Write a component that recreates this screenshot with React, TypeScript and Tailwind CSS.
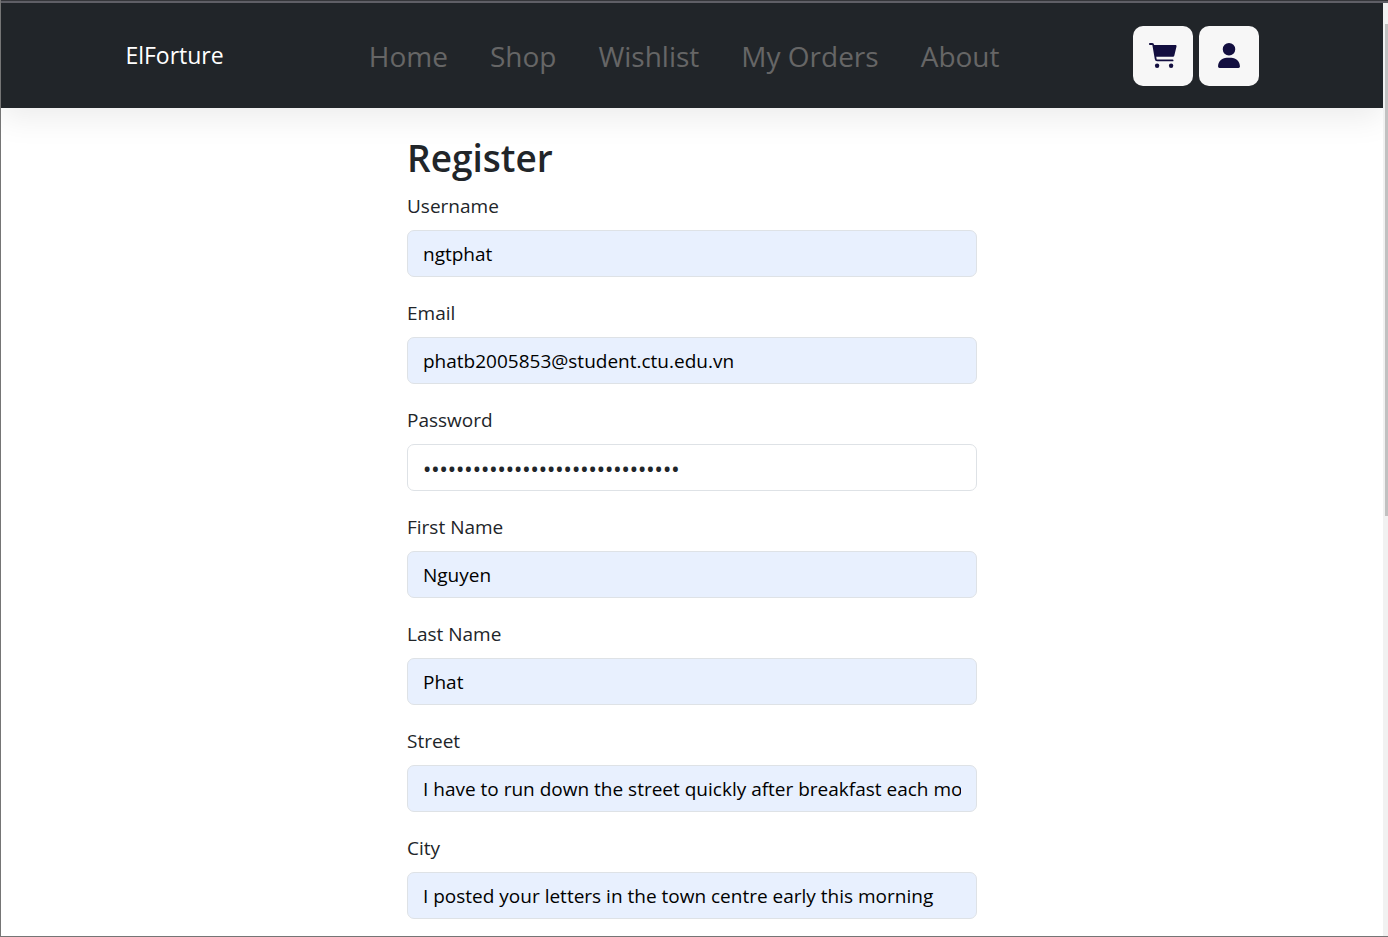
import { FaUser } from "react-icons/fa6";

type FieldProps = {
  id: string;
  label: string;
  type?: string;
  value: string;
  filled?: boolean;
};

const links = ["Home", "Shop", "Wishlist", "My Orders", "About"];

const fields: FieldProps[] = [
  { id: "username", label: "Username", value: "ngtphat", filled: true },
  { id: "email", label: "Email", type: "email", value: "phatb2005853@student.ctu.edu.vn", filled: true },
  { id: "password", label: "Password", type: "password", value: "correcthorsebatterystaple-12345" },
  { id: "firstName", label: "First Name", value: "Nguyen", filled: true },
  { id: "lastName", label: "Last Name", value: "Phat", filled: true },
  { id: "street", label: "Street", value: "I have to run down the street quickly after breakfast each morning", filled: true },
  { id: "city", label: "City", value: "I posted your letters in the town centre early this morning", filled: true },
];

function CartIcon() {
  return (
    <svg viewBox="0 0 28 26" className="h-[26px] w-7" fill="currentColor" aria-hidden="true">
      <path d="M4.2 2H26.4c.9 0 1.3.6 1.1 1.4l-2.1 8.8c-.2 1-.9 1.6-1.9 1.6H6.4z" />
      <path
        d="M.8 1H3.2c.7 0 1 .3 1.1 1L6.7 16c.1.9.6 1.4 1.4 1.4H23.6"
        fill="none"
        stroke="currentColor"
        strokeWidth="1.8"
        strokeLinecap="round"
        strokeLinejoin="round"
      />
      <circle cx="8.1" cy="22.7" r="2.2" />
      <circle cx="22.1" cy="22.7" r="2.2" />
    </svg>
  );
}

function Field({ id, label, type = "text", value, filled }: FieldProps) {
  const tone = filled ? "bg-[#e8f0fe] text-black" : "bg-white text-[#212529]";
  const face = type === "password" ? "font-['Noto_Sans',sans-serif] text-[22px]" : "text-[19px]";
  return (
    <div>
      <label htmlFor={id} className="mb-2 block text-[19px] leading-[32px]">
        {label}
      </label>
      <input
        id={id}
        name={id}
        type={type}
        defaultValue={value}
        className={`block h-[47px] w-full rounded-[7px] border border-[#dee2e6] px-[15px] outline-none ${tone} ${face}`}
      />
    </div>
  );
}

export default function App() {
  return (
    <div className="flex h-screen flex-col overflow-hidden border-b border-l border-[#757575] bg-white font-['Open_Sans',sans-serif] text-[#212529]">
      <div className="h-[3px] shrink-0 border-b-2 border-[#5f5f66] bg-[#35363a]" />
      <div className="flex min-h-0 flex-1">
        <div className="min-w-0 flex-1 overflow-hidden">
          <header className="bg-[#212529] shadow-[0_10px_30px_rgba(0,0,0,0.08)]">
            <div className="mx-auto flex h-[105px] w-[82%] items-center justify-between">
              <a href="#" className="text-[23px] text-white">
                ElForture
              </a>
              <nav className="ml-3">
                <ul className="flex gap-[42px] text-[28px] text-[#666666]">
                  {links.map((link) => (
                    <li key={link}>
                      <a href="#">{link}</a>
                    </li>
                  ))}
                </ul>
              </nav>
              <div className="flex gap-1.5 text-[#130f40]">
                <button aria-label="Cart" className="flex size-[60px] items-center justify-center rounded-[10px] bg-[#f7f7f7]">
                  <CartIcon />
                </button>
                <button aria-label="Account" className="flex size-[60px] items-center justify-center rounded-[10px] bg-[#f7f7f7]">
                  <FaUser className="h-[25px] w-[22px]" />
                </button>
              </div>
            </div>
          </header>
          <main className="mx-auto w-full max-w-[570px] pt-[25px]">
            <h1 className="mb-2 text-[37px] leading-[49px] font-semibold">Register</h1>
            <form className="flex flex-col gap-5">
              {fields.map((field) => (
                <Field key={field.id} {...field} />
              ))}
            </form>
          </main>
        </div>
        <div className="w-[5px] shrink-0 bg-[#f1f1f1] pt-[21px] pl-0.5">
          <div className="h-[54%] bg-[#c1c1c1]" />
        </div>
      </div>
    </div>
  );
}
